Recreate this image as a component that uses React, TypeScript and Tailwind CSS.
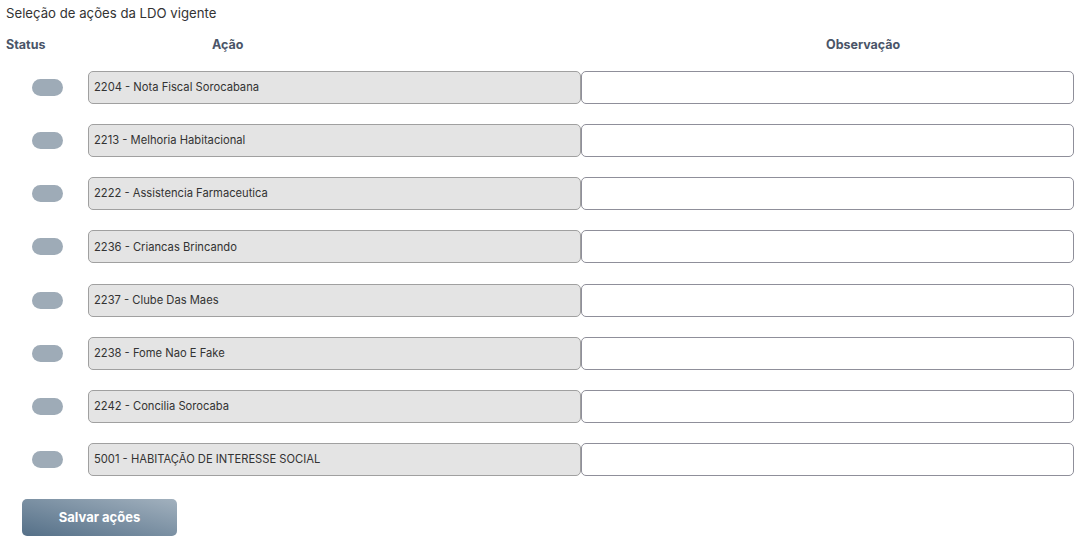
import React from "react";

const rows = [
  "2204 - Nota Fiscal Sorocabana",
  "2213 - Melhoria Habitacional",
  "2222 - Assistencia Farmaceutica",
  "2236 - Criancas Brincando",
  "2237 - Clube Das Maes",
  "2238 - Fome Nao E Fake",
  "2242 - Concilia Sorocaba",
  "5001 - HABITAÇÃO DE INTERESSE SOCIAL",
];

export default function App() {
  return (
    <div
      className="w-[1086px] h-[543px] bg-white pl-[6px] overflow-hidden"
      style={{ fontFamily: "Inter, 'Open Sans', sans-serif" }}
    >
      <div className="pt-[5px] h-[22px] text-[13.2px] leading-[16px] text-[#333]">
        Seleção de ações da LDO vigente
      </div>
      <div className="flex h-[32px] items-end pb-[1px] text-[12.5px] font-bold text-[#4a5568] leading-[16px]">
        <div className="w-[206px]">Status</div>
        <div className="w-[614px]">Ação</div>
        <div>Observação</div>
      </div>
      <div className="pt-[17px] flex flex-col gap-[20.15px]">
        {rows.map((r) => (
          <div key={r} className="flex items-center h-[33px]">
            <div className="w-[82px] flex justify-center">
              <div className="w-[31px] h-[17px] rounded-full bg-[#9eabb7]" />
            </div>
            <div className="w-[493px] h-[33px] rounded-[5px] border border-[#a0a0a0] bg-[#e4e4e4] flex items-center pl-[5px] text-[11.2px] text-[#333]">
              {r}
            </div>
            <div className="w-[493px] h-[33px] rounded-[5px] border border-[#8f8f9a] bg-white" />
          </div>
        ))}
      </div>
      <div className="pt-[23px] pl-[16px]">
        <button className="w-[155px] h-[37px] rounded-[5px] bg-gradient-to-tr from-[#557088] to-[#a2b1be] text-white font-bold text-[13px]">
          Salvar ações
        </button>
      </div>
    </div>
  );
}
